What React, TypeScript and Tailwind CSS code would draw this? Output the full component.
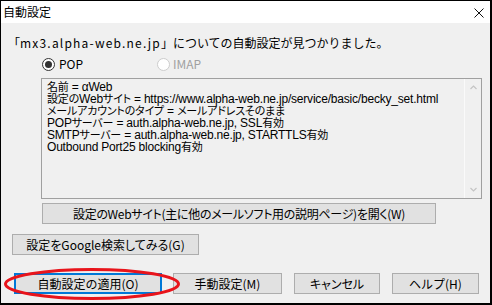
import React from 'react'

const ui = { fontFamily: '"Noto Sans CJK JP", "Liberation Sans", sans-serif' }
const mono = { fontFamily: '"Liberation Sans", "Noto Sans CJK JP", sans-serif' }

const lines = [
  '名前 = αWeb',
  '設定のWebサイト = https://www.alpha-web.ne.jp/service/basic/becky_set.html',
  'メールアカウントのタイプ = メールアドレスそのまま',
  'POPサーバー = auth.alpha-web.ne.jp, SSL有効',
  'SMTPサーバー = auth.alpha-web.ne.jp, STARTTLS有効',
  'Outbound Port25 blocking有効',
]

// kana/kanji runs are drawn a little smaller, like the proportional UI font in the shot
function InfoLine({ text }: { text: string }) {
  const parts = text.split(/([\u3000-\u30ff\u4e00-\u9fff]+)/)
  return (
    <div className="whitespace-nowrap">
      {parts.map((p, i) =>
        /[\u3000-\u30ff\u4e00-\u9fff]/.test(p) ? (
          <span key={i} className="text-[11px]">{p}</span>
        ) : (
          <span key={i}>{p}</span>
        )
      )}
    </div>
  )
}

function Btn({ label, className }: { label: string; className: string }) {
  return (
    <div
      className={`flex items-center justify-center bg-[#e1e1e1] border border-[#adadad] text-[12px] leading-none text-black ${className}`}
    >
      {label}
    </div>
  )
}

function Radio({ checked, disabled }: { checked?: boolean; disabled?: boolean }) {
  return (
    <svg width="13" height="13" viewBox="0 0 13 13">
      <circle cx="6.5" cy="6.5" r="6" fill="#fff" stroke={disabled ? '#cccccc' : '#333333'} />
      {checked && <circle cx="6.5" cy="6.5" r="3.5" fill="#333333" />}
    </svg>
  )
}

export default function App() {
  return (
    <div
      className="relative w-[492px] h-[305px] flex flex-col border-l border-t border-r-2 border-b-2 border-black bg-[#f0f0f0] overflow-hidden"
      style={ui}
    >
      {/* title bar */}
      <div className="h-[22px] bg-white flex items-center justify-between pl-[2px] pr-[6px] shrink-0">
        <span className="text-[12px] leading-none text-black">自動設定</span>
        <svg width="10" height="10" viewBox="0 0 10 10" className="mt-[1px]">
          <path d="M0.5 0.5 L9.5 9.5 M9.5 0.5 L0.5 9.5" stroke="#111" strokeWidth="1" />
        </svg>
      </div>

      {/* body */}
      <div className="flex flex-col pt-[12px]">
        <div className="pl-[7px] text-[12px] leading-[16px] text-black whitespace-nowrap">
          「<span className="tracking-[1.2px]">mx3.alpha-web.ne.jp</span>」についての自動設定が見つかりました。
        </div>

        <div className="mt-[5px] h-[16px] pl-[41px] flex items-center text-[12px] leading-none">
          <div className="w-[115px] flex items-center gap-[4px] text-black">
            <Radio checked />
            <span>POP</span>
          </div>
          <div className="flex items-center gap-[3px] text-[#a0a0a0]">
            <Radio disabled />
            <span>IMAP</span>
          </div>
        </div>

        <div className="mt-[6px] ml-[40px] w-[441px] h-[121px] border border-[#a0a0a0] flex">
          <div
            className="flex-1 pl-[5px] pt-[2px] text-[12px] leading-[12px] text-black tracking-[-0.2px] [font-feature-settings:'palt']"
            style={mono}
          >
            {lines.map((l) => (
              <InfoLine key={l} text={l} />
            ))}
          </div>
          <div className="w-[17px] border-l border-[#fafafa] flex flex-col items-center justify-between py-[6px]">
            <svg width="7" height="5" viewBox="0 0 7 5">
              <path d="M0.5 4 L3.5 1 L6.5 4" fill="none" stroke="#c4c4c4" strokeWidth="1.2" />
            </svg>
            <svg width="7" height="5" viewBox="0 0 7 5">
              <path d="M0.5 1 L3.5 4 L6.5 1" fill="none" stroke="#c4c4c4" strokeWidth="1.2" />
            </svg>
          </div>
        </div>

        <Btn
          label="設定のWebサイト(主に他のメールソフト用の説明ページ)を開く(W)"
          className="mt-[4px] ml-[41px] w-[394px] h-[21px] [font-feature-settings:'palt'] tracking-[-0.3px]"
        />
        <Btn
          label="設定をGoogle検索してみる(G)"
          className="mt-[10px] ml-[11px] w-[187px] h-[21px] [font-feature-settings:'palt']"
        />

        <div className="mt-[18px] flex">
          <div className="ml-[13px] w-[148px] h-[21px] flex items-center justify-center bg-[#e1e1e1] border-2 border-[#0078d7] text-[12px] leading-none text-black">
            自動設定の適用(O)
          </div>
          <Btn label="手動設定(M)" className="ml-[11px] w-[109px] h-[21px]" />
          <Btn label="キャンセル" className="ml-[12px] w-[86px] h-[21px] [font-feature-settings:'palt']" />
          <Btn label="ヘルプ(H)" className="ml-[12px] w-[87px] h-[21px]" />
        </div>
      </div>

      {/* red highlight */}
      <svg className="absolute left-[2px] top-[266px]" width="178" height="34" viewBox="0 0 178 34">
        <ellipse cx="89" cy="17" rx="86.5" ry="14.5" fill="none" stroke="#e8141b" strokeWidth="3" />
      </svg>
    </div>
  )
}
